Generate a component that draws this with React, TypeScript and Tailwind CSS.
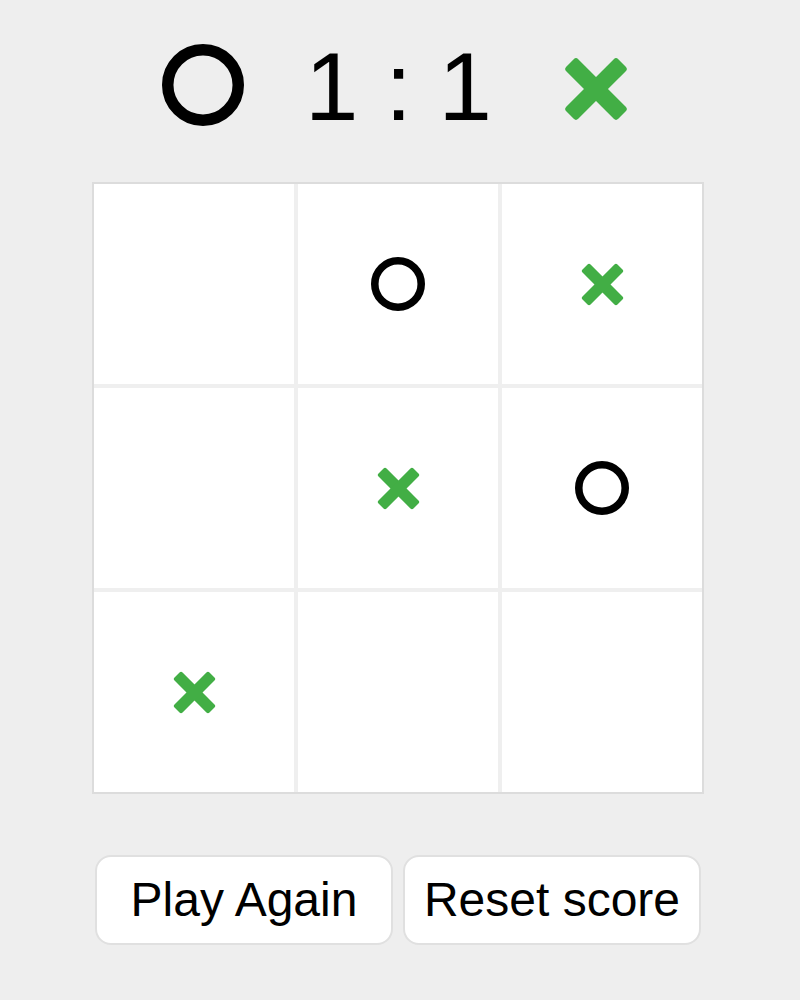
const GREEN = "#42ae45";

type Mark = "O" | "X" | null;

const board: Mark[] = [null, "O", "X", null, "X", "O", "X", null, null];

// ring icon for player O
const Ring = ({ size }: { size: number }) => (
  <svg width={size} height={size} viewBox="0 0 100 100" className="block">
    <circle cx="50" cy="50" r="43" fill="none" stroke="#000" strokeWidth="14" />
  </svg>
);

// cross icon for player X
const Cross = ({ size }: { size: number }) => (
  <svg width={size} height={size} viewBox="0 0 100 100" className="block">
    <g fill={GREEN}>
      <rect x="-7.5" y="36.75" width="115" height="26.5" rx="5" transform="rotate(45 50 50)" />
      <rect x="-7.5" y="36.75" width="115" height="26.5" rx="5" transform="rotate(-45 50 50)" />
    </g>
  </svg>
);

export default function App() {
  return (
    <div
      className="min-h-screen w-full bg-[#eeeeee] flex flex-col items-center pt-[39px] pr-[4px] text-black"
      style={{ fontFamily: '"Liberation Sans", Arial, sans-serif' }}
    >
      {/* score */}
      <div className="flex items-start h-[96px] pr-[6px]">
        <div className="mt-[5px]">
          <Ring size={82} />
        </div>
        <div className="ml-[61px] text-[96px] leading-none whitespace-pre">1 : 1</div>
        <div className="ml-[72px] mt-[18px]">
          <Cross size={64} />
        </div>
      </div>

      {/* board */}
      <div className="mt-[47px] w-[612px] border-2 border-[#dcdcdc] bg-[#efefef] grid grid-cols-3 gap-[4px]">
        {board.map((m, i) => (
          <div key={i} className="h-[200px] bg-white flex items-center justify-center">
            {m === "O" && <Ring size={54} />}
            {m === "X" && <Cross size={43} />}
          </div>
        ))}
      </div>

      {/* actions */}
      <div className="mt-[61px] flex gap-[10px]">
        <button className="w-[298px] h-[90px] bg-white border-2 border-[#e0e0e0] rounded-[16px] text-[48px] flex items-center justify-center">
          Play Again
        </button>
        <button className="w-[298px] h-[90px] bg-white border-2 border-[#e0e0e0] rounded-[16px] text-[48px] flex items-center justify-center">
          Reset score
        </button>
      </div>
    </div>
  );
}
